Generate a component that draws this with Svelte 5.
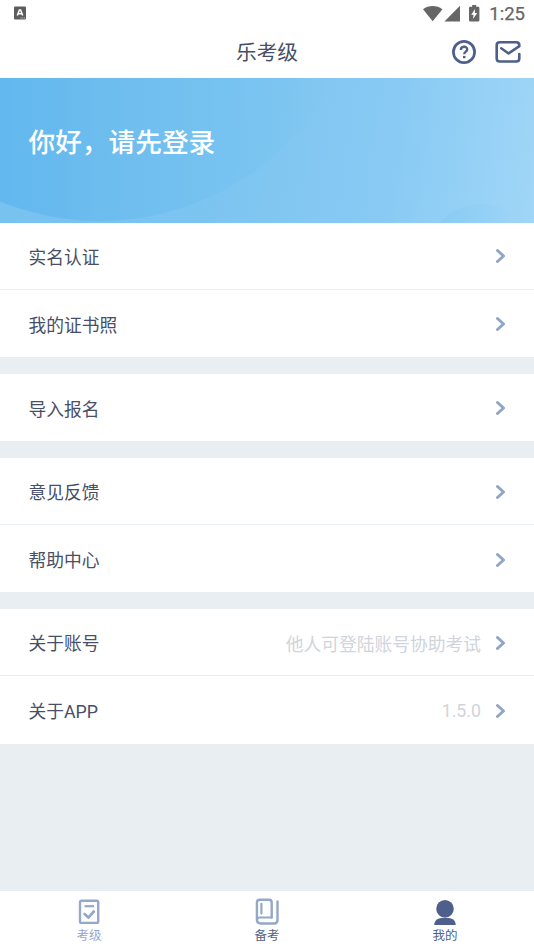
<div class="screen">
  <header>
    <div class="status">
      <svg class="keyboard" width="12" height="14" viewBox="0 0 12 14">
        <rect y="0.5" width="12" height="13" rx="1" fill="#5d5d5d" />
        <path d="M3.3 9.5 5.4 4h1.2l2.1 5.5M4.3 7.7h3.4" fill="none" stroke="#fff" stroke-width="1.5" />
        <path d="M6.5 12h4.5" stroke="#ccc" stroke-width="1" stroke-dasharray="1 .7" />
      </svg>
      <div class="system">
        <svg width="58" height="18" viewBox="0 0 58 18" fill="#666">
          <path d="M0 4.2C5.6-.2 13.8-.2 19.4 4.2L9.7 16.2Z" />
          <path d="M37 .8V16.4H21.4Z" />
          <path d="M47.2 1.7h2V0h4v1.7h2q1.2 0 1.2 1.2v12.3q0 1.2-1.2 1.2h-8q-1.2 0-1.2-1.2V2.9q0-1.2 1.2-1.2Z" />
          <path d="M52 4 48.2 9.7h2.3L50 14l4.2-6h-2.4Z" fill="#fff" />
        </svg>
        <time>1:25</time>
      </div>
    </div>
    <div class="titlebar">
      <h1>乐考级</h1>
      <div class="actions">
        <button aria-label="帮助">
          <svg width="26" height="26" viewBox="0 0 26 26" fill="none" stroke="#4e5f8c" stroke-width="2.7">
            <circle cx="13" cy="13" r="10.6" />
            <path d="M9.9 11C9.7 6.9 16.2 6.7 16.2 10.4c0 2.3-3 2.3-3 4.8" stroke-width="2.4" />
            <path d="M12 16.9h2.5v2.3H12Z" fill="#4e5f8c" stroke="none" />
          </svg>
        </button>
        <button aria-label="消息">
          <svg width="26" height="24" viewBox="0 0 26 24" fill="none" stroke="#4e5f8c" stroke-width="2.6" stroke-linecap="round" stroke-linejoin="round">
            <path d="M24.3 6V5.2Q24.3 2.3 21.4 2.3H4.6Q1.7 2.3 1.7 5.2v13.4q0 2.9 2.9 2.9h16.8q2.9 0 2.9-2.9V14" />
            <path d="m6.2 8.2 7.4 5.2L24 6.4" stroke-width="2.5" />
          </svg>
        </button>
      </div>
    </div>
  </header>

  <section class="banner">
    <h2>你好，请先登录</h2>
  </section>

  <main>
    {#each groups as group}
      <div class="group">
        {#each group as item}
          <div class="row">
            <span class="label">{item.label}</span>
            {#if item.note}<span class="note">{item.note}</span>{/if}
            <svg class="chevron" width="10" height="16" viewBox="0 0 10 16">
              <path d="m1.5 2.5 6 5.5-6 5.5" fill="none" stroke="#91a5c8" stroke-width="3" stroke-linecap="round" stroke-linejoin="round" />
            </svg>
          </div>
        {/each}
      </div>
    {/each}
  </main>

  <nav>
    {#each tabs as tab}
      <button class="tab" class:muted={tab.icon === "exam"}>
        <svg width="26" height="28" viewBox="0 0 26 28" fill="none" stroke="#93a8cb" stroke-width="2.4" stroke-linecap="round" stroke-linejoin="round">
          {#if tab.icon === "exam"}
            <rect x="4" y="2.7" width="18.2" height="22.2" rx="1.5" />
            <path d="M8.5 8.2h9.6" stroke-width="2.2" stroke-linecap="butt" />
            <path d="m8.6 16 3.8 3.6 5.4-6.1" stroke-width="2.7" />
          {:else if tab.icon === "book"}
            <path d="M17.7 19.5V4.5q0-2.8-2.8-2.8H5.7q-2.8 0-2.8 2.8v17q0 4 4 4H20q3.5 0 3.5-3.5V3.5" stroke-width="2.4" />
            <path d="M3 22q0-2.5 3-2.5h11.7M7.4 5.8v9.8" stroke-width="2.2" />
          {:else}
            <g fill="#4e5f8c" stroke="none">
              <ellipse cx="13" cy="10.8" rx="8.8" ry="8.9" />
              <path d="M2.4 27v-1.6Q3.8 20.2 9.5 20h7q5.7.2 7.1 5.4V27Z" />
            </g>
          {/if}
        </svg>
        <span>{tab.label}</span>
      </button>
    {/each}
  </nav>
</div>

<script lang="ts">
  type Item = {label: string, note?: string};

  const groups: Item[][] = [
    [{label: "实名认证"}, {label: "我的证书照"}],
    [{label: "导入报名"}],
    [{label: "意见反馈"}, {label: "帮助中心"}],
    [{label: "关于账号", note: "他人可登陆账号协助考试"}, {label: "关于APP", note: "1.5.0"}],
  ];

  const tabs = [
    {icon: "exam", label: "考级"},
    {icon: "book", label: "备考"},
    {icon: "user", label: "我的"},
  ];
</script>

<style>
  :global(body) {margin: 0}

  .screen {
    display: flex;
    flex-direction: column;
    height: 950px;
    overflow: hidden;
    background: #e9eef2;
    color: #474f68;
    font-family: Roboto, "Noto Sans CJK SC", sans-serif;
  }
  svg {display: block; flex: none}
  h1, h2 {margin: 0}
  button {
    padding: 0;
    border: 0;
    background: none;
    color: inherit;
    font: inherit;
  }

  header {
    flex: none;
    height: 78px;
    background: #fff;
  }
  .status {
    display: flex;
    justify-content: space-between;
    height: 26px;
    padding: 0 9px 0 14px;
    box-sizing: border-box;
  }
  .keyboard {margin-top: 6px}
  .system {
    display: flex;
    gap: 8px;
    padding-top: 4.5px;
    color: #666;
  }
  time {
    font-size: 18.5px;
    font-weight: 400;
    line-height: 19px;
    -webkit-text-stroke: 0.25px;
  }
  .titlebar {
    display: grid;
    grid-template-columns: 1fr auto 1fr;
    align-items: center;
    height: 52px;
  }
  h1 {
    grid-column: 2;
    padding-top: 2px;
    font-size: 20.7px;
    font-weight: 400;
    line-height: 30px;
  }
  .actions {
    display: flex;
    justify-content: flex-end;
    align-items: center;
    gap: 18px;
    padding-right: 13.5px;
  }

  .banner {
    position: relative;
    flex: none;
    box-sizing: border-box;
    height: 144.6px;
    padding: 45px 28.5px;
    overflow: hidden;
    background: linear-gradient(98deg, #78c2f0 0%, #7cc4f0 40%, #88caf4 72%, #a0d6f7 100%);
  }
  /* large and small translucent discs behind the greeting */
  .banner::before, .banner::after {
    content: "";
    position: absolute;
    border-radius: 50%;
  }
  .banner::before {
    left: -165px;
    bottom: 1.5px;
    width: 530px;
    height: 530px;
    background: linear-gradient(90deg, #62b8ef 165px, #6cbcee 260px, rgba(116, 194, 240, 0.8) 380px, rgba(126, 198, 241, 0) 490px);
  }
  .banner::after {
    left: 424px;
    top: 126px;
    width: 116px;
    height: 116px;
    background: linear-gradient(90deg, rgba(118, 194, 238, 0.3), rgba(118, 194, 238, 0) 85%);
  }
  h2 {
    position: relative;
    z-index: 1;
    color: #fff;
    font-size: 26.7px;
    font-weight: 500;
    line-height: 40px;
  }

  main {flex: 1}
  .group {
    margin-bottom: 16.8px;
    background: #fff;
  }
  .row {
    display: flex;
    align-items: center;
    box-sizing: border-box;
    height: 67.25px;
    padding: 1.4px 28.5px 0;
    font-size: 17.75px;
  }
  .row:not(:last-child) {border-bottom: 1px solid #e9eef2}
  .label {
    flex: 1;
    padding-bottom: 1.2px;
  }
  .note {
    margin-right: 14.5px;
    padding-top: 0.6px;
    color: #d0d4dc;
  }

  nav {
    display: flex;
    flex: none;
    height: 59px;
    background: #fff;
  }
  .tab {
    display: flex;
    flex: 1;
    flex-direction: column;
    align-items: center;
    padding-top: 7px;
    color: #4e5f8c;
    font-size: 12.5px;
    line-height: 20px;
  }
  .muted {color: #93a8cb}
</style>
